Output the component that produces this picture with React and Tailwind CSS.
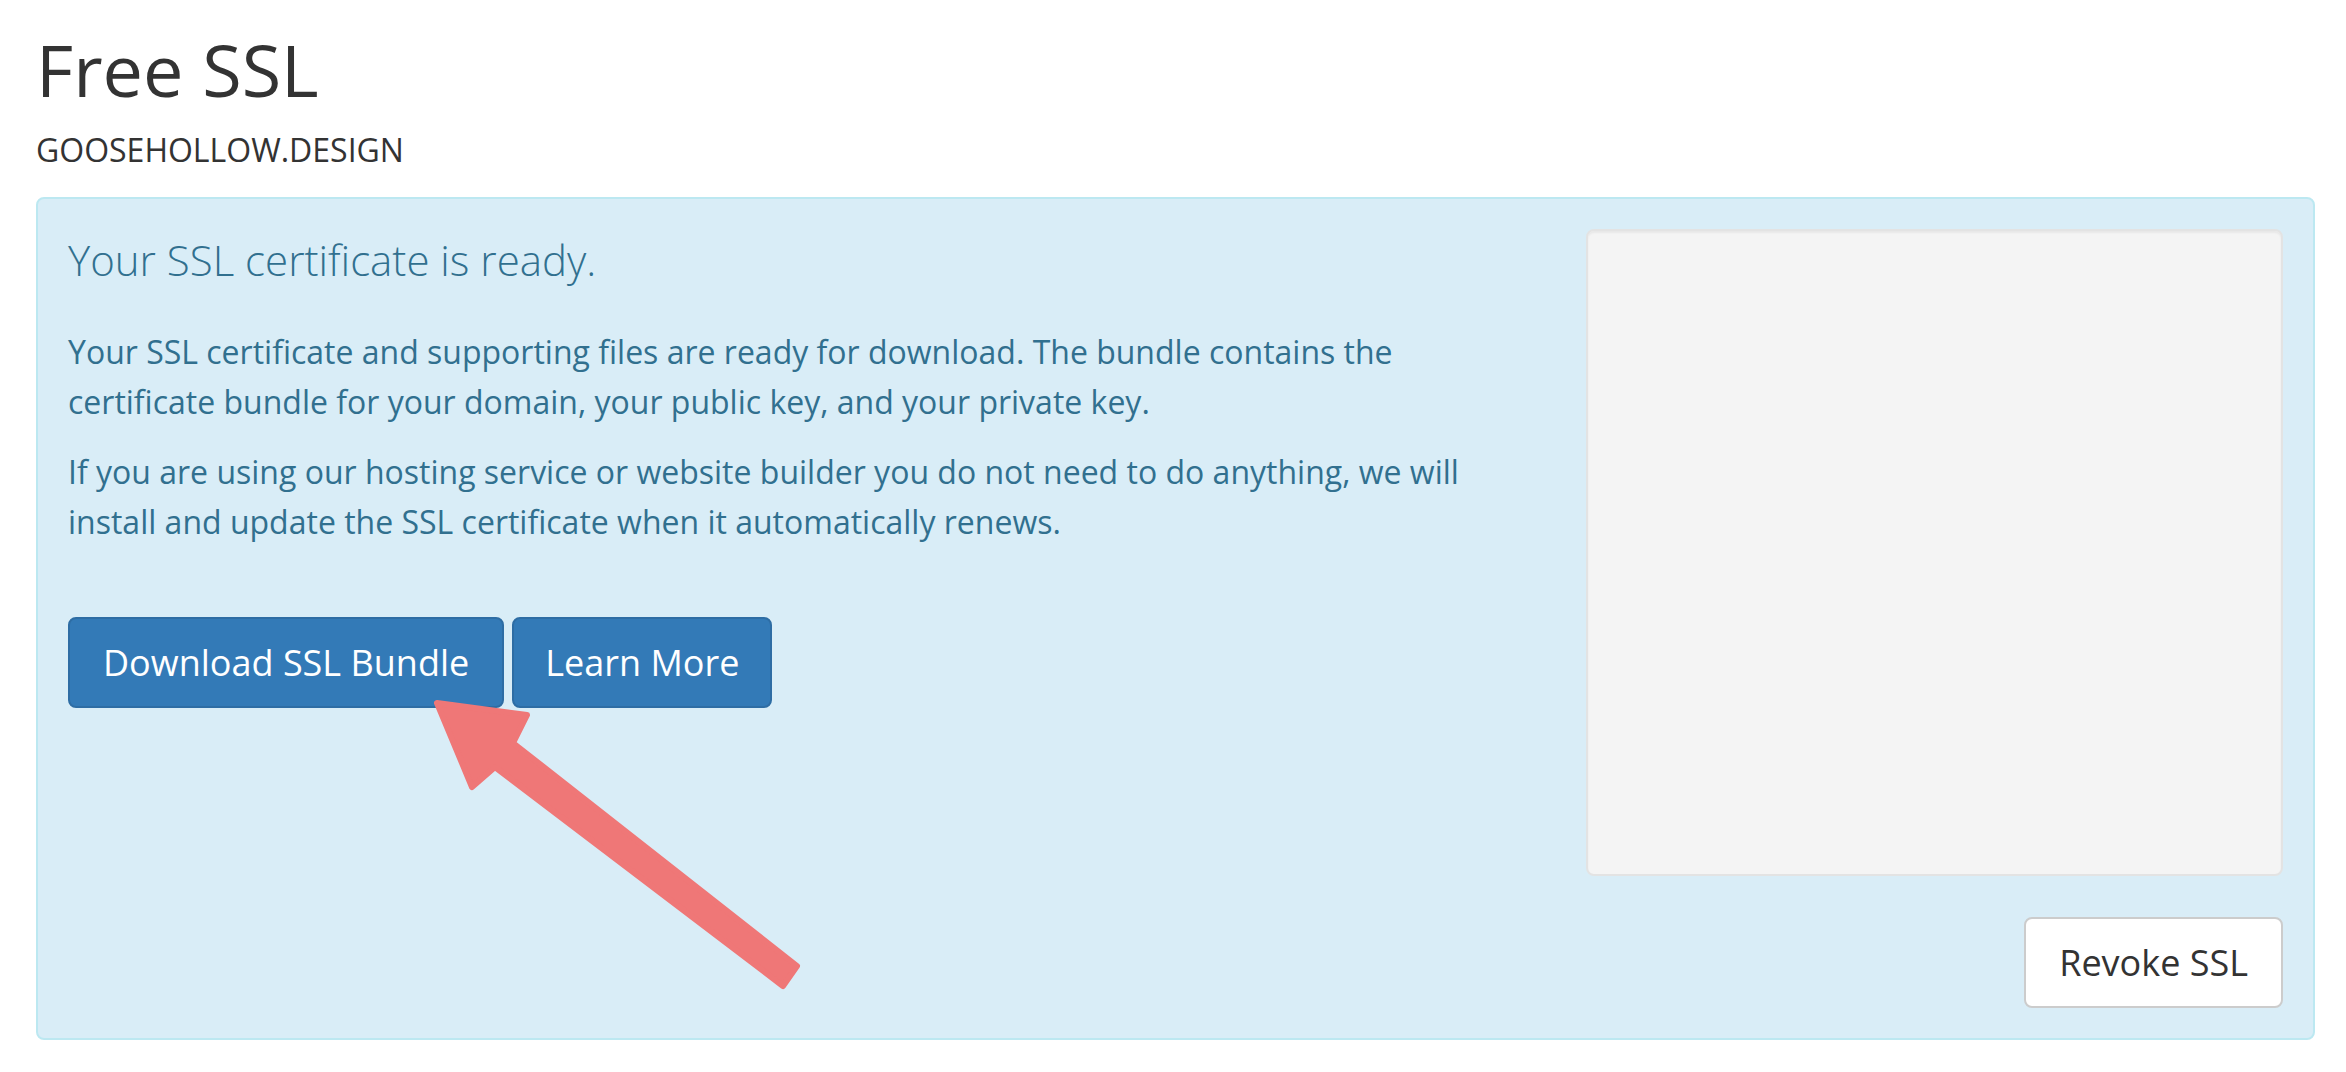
export default function App() {
  return (
    <div
      className="relative min-h-[1072px] bg-white pl-[36px] pr-[31px] pt-[33px] text-[#333333]"
      style={{ fontFamily: '"Open Sans", "Liberation Sans", sans-serif' }}
    >
      <h1 className="text-[72px] leading-[72px] font-normal">Free SSL</h1>
      <p className="mt-[29px] text-[32px] leading-[32px]">GOOSEHOLLOW.DESIGN</p>

      <div className="mt-[31px] flex rounded-[8px] border-2 border-[#bce8f1] bg-[#d9edf7] pt-[30px] pb-[30px] pl-[30px] pr-[30px] text-[#31708f]">
        <div className="flex-1 pr-[88px]">
          <h3 className="mt-[7px] text-[42px] leading-[48px] font-light">Your SSL certificate is ready.</h3>
          <p className="mt-[43px] text-[32px] leading-[50px]">
            Your SSL certificate and supporting files are ready for download. The bundle contains the
            certificate bundle for your domain, your public key, and your private key.
          </p>
          <p className="mt-[20px] text-[32px] leading-[50px]">
            If you are using our hosting service or website builder you do not need to do anything, we will
            install and update the SSL certificate when it automatically renews.
          </p>
          <div className="mt-[70px] flex gap-[8px]">
            <button className="rounded-[8px] border-2 border-[#2e6da4] bg-[#337ab7] px-[33px] py-[18px] text-[36px] leading-[51px] text-white">
              Download SSL Bundle
            </button>
            <button className="rounded-[8px] border-2 border-[#2e6da4] bg-[#337ab7] px-[31px] py-[18px] text-[36px] leading-[51px] text-white">
              Learn More
            </button>
          </div>
        </div>

        <div className="flex w-[697px] flex-col items-end">
          <div className="h-[647px] w-full rounded-[8px] border-2 border-[#e3e3e3] bg-[#f4f4f4] shadow-[inset_0_2px_2px_rgba(0,0,0,0.05)]" />
          <button className="mt-[41px] rounded-[8px] border-2 border-[#cccccc] bg-white px-[33px] py-[18px] text-[36px] leading-[51px] text-[#333333]">
            Revoke SSL
          </button>
        </div>
      </div>

      <svg
        className="pointer-events-none absolute top-0 left-0"
        width="2346"
        height="1072"
        viewBox="0 0 2346 1072"
      >
        <polygon
          points="437,703 527,715 513,743 797,966 783,986 495,767 472,787"
          fill="#ef7777"
          stroke="#ef7777"
          strokeWidth="6"
          strokeLinejoin="round"
        />
      </svg>
    </div>
  );
}
